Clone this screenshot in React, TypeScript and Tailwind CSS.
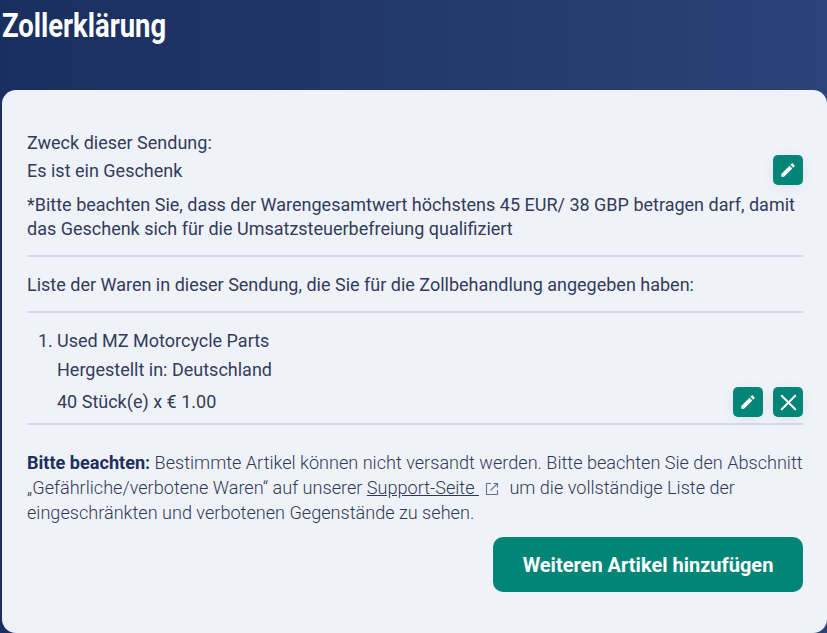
import { X } from 'lucide-react';

function PencilIcon() {
  return (
    <svg viewBox="0 0 24 24" className="w-[18px] h-[18px] fill-white">
      <path d="M3 17.25V21h3.75L17.81 9.94l-3.75-3.75L3 17.25zM20.71 7.04a1 1 0 0 0 0-1.41l-2.34-2.34a1 1 0 0 0-1.41 0l-1.83 1.83 3.75 3.75 1.83-1.83z" />
    </svg>
  );
}

function LinkOutIcon() {
  return (
    <svg viewBox="0 0 14 14" fill="none" className="inline w-[14px] h-[14px] mx-[6px] align-[-2px] stroke-[#6b7380]">
      <path d="M6 1.5H1.5v11h11V8M5.5 8.5l7-7M8.5 1.5h4v4" strokeWidth="1.1" />
    </svg>
  );
}

function IconButton({ children }: { children: React.ReactNode }) {
  return (
    <button
      type="button"
      className="flex items-center justify-center w-[30px] h-[30px] rounded-[5px] bg-[#008577] shadow-[0_2px_12px_rgba(30,50,100,0.08)]"
    >
      {children}
    </button>
  );
}

export default function App() {
  return (
    <div className="w-[827px] h-[633px] overflow-hidden flex flex-col pl-[2px] bg-gradient-to-r from-[#1a2f60] to-[#2b4378] font-['Roboto',sans-serif] text-[18px] leading-[28px] text-[#333b5a]">
      <h1 className="h-[90px] pt-[6px] text-[33px] leading-[40px] font-bold text-white origin-left scale-x-[0.83]">
        Zollerklärung
      </h1>

      <div className="flex-1 rounded-[14px] bg-[#eff3f9] pl-[25px] pr-[24px] pt-[39px]">
        <p>Zweck dieser Sendung:</p>
        <div className="flex items-center justify-between h-[28px]">
          <p>Es ist ein Geschenk</p>
          <div className="-mt-[2px]">
            <IconButton>
              <PencilIcon />
            </IconButton>
          </div>
        </div>
        <p className="mt-[8px] leading-[24px] pb-[14px] border-b-2 border-[#d5dbe3]">
          *Bitte beachten Sie, dass der Warengesamtwert höchstens 45 EUR/ 38 GBP betragen darf, damit das Geschenk sich für die Umsatzsteuerbefreiung qualifiziert
        </p>
        <p className="pt-[14px] pb-[12px] border-b-2 border-[#d5dbe3]">
          Liste der Waren in dieser Sendung, die Sie für die Zollbehandlung angegeben haben:
        </p>

        <div className="flex pt-[14px] pb-[5px] border-b-2 border-[#d5dbe3]">
          <span className="w-[30px] pl-[11px]">1.</span>
          <div className="flex-1">
            <p>Used MZ Motorcycle Parts</p>
            <p className="mt-[1px]">Hergestellt in: Deutschland</p>
            <div className="flex items-center justify-between h-[32px] mt-[2px]">
              <p>40 Stück(e) x € 1.00</p>
              <div className="flex gap-[10px]">
                <IconButton>
                  <PencilIcon />
                </IconButton>
                <IconButton>
                  <X className="w-[27px] h-[27px] text-white" strokeWidth={1.8} />
                </IconButton>
              </div>
            </div>
          </div>
        </div>

        <p className="mt-[25px] text-[18.1px] leading-[25px] font-light text-[#2f3957]">
          <strong className="font-bold text-[#1c2f5e]">Bitte beachten:</strong> Bestimmte Artikel können nicht versandt werden. Bitte beachten Sie den Abschnitt „Gefährliche/verbotene Waren“ auf unserer{' '}
          <a className="underline">Support-Seite&nbsp;</a>
          <LinkOutIcon />
          {' '}um die vollständige Liste der eingeschränkten und verbotenen Gegenstände zu sehen.
        </p>

        <div className="flex justify-end mt-[12px]">
          <button
            type="button"
            className="w-[310px] h-[55px] rounded-[10px] bg-[#008577] text-white text-[20px] font-bold"
          >
            Weiteren Artikel hinzufügen
          </button>
        </div>
      </div>
    </div>
  );
}
